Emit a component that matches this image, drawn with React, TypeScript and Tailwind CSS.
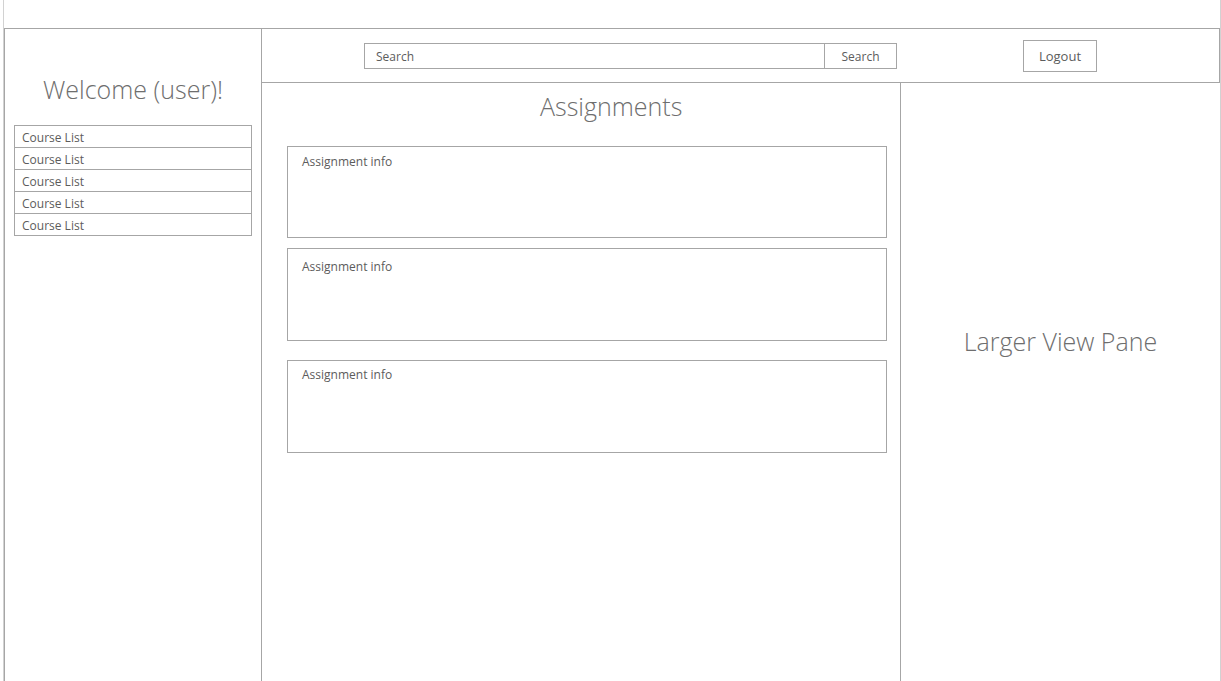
const courses = ['Course List', 'Course List', 'Course List', 'Course List', 'Course List']

const assignments = [
  { id: 1, label: 'Assignment info', box: 'mt-0 h-[92px] pt-[6px]' },
  { id: 2, label: 'Assignment info', box: 'mt-[10px] h-[93px] pt-[9px]' },
  { id: 3, label: 'Assignment info', box: 'mt-[19px] h-[93px] pt-[5px]' },
]

function Sidebar() {
  return (
    <aside className="flex w-[258px] shrink-0 flex-col border-x border-t border-[#a6a6a6] px-[9px]">
      <h1 className="mt-[43px] text-center text-[25px] leading-[34px] font-light text-[#6e6e6e]">Welcome (user)!</h1>
      <ul className="mt-[19px] flex flex-col">
        {courses.map((course, index) => (
          <li
            key={index}
            className={`flex h-[23px] items-center border border-[#a6a6a6] pt-[2px] pl-[7px] text-[12px] text-[#5c5c5c] ${index > 0 ? '-mt-px' : ''}`}
          >
            {course}
          </li>
        ))}
      </ul>
    </aside>
  )
}

function Header() {
  return (
    <header className="flex h-[55px] shrink-0 items-center border-y border-r border-[#a6a6a6] pl-[102px]">
      <div className="flex h-[26px]">
        <div className="flex w-[461px] items-center border border-[#a6a6a6] pl-[11px] pt-[2px] text-[12px] text-[#5c5c5c]">Search</div>
        <button
          type="button"
          className="-ml-px flex w-[73px] items-center justify-center border border-[#a6a6a6] pt-[2px] text-[12px] text-[#5c5c5c]"
        >
          Search
        </button>
      </div>
      <button
        type="button"
        className="ml-[126px] flex h-[32px] w-[74px] items-center justify-center border border-[#a6a6a6] pt-[2px] text-[13px] text-[#5c5c5c]"
      >
        Logout
      </button>
    </header>
  )
}

export default function App() {
  return (
    <div className="h-[681px] w-[1221px] overflow-hidden bg-white font-['Open_Sans',sans-serif]">
      <div className="ml-[3px] flex h-full w-[1218px] border-x border-[#d2d2d2] pt-[28px]">
        <Sidebar />
        <main className="flex min-w-0 flex-1 flex-col">
          <Header />
          <div className="flex flex-1">
            <section className="w-[639px] shrink-0 border-r border-[#a6a6a6] pl-[25px]">
              <h2 className="mt-[7px] pl-[253px] text-[25px] leading-[32px] font-light text-[#6e6e6e]">Assignments</h2>
              <div className="mt-[24px] flex flex-col">
                {assignments.map((item) => (
                  <div
                    key={item.id}
                    className={`w-[600px] border border-[#a6a6a6] px-[14px] text-[12px] text-[#5c5c5c] ${item.box}`}
                  >
                    {item.label}
                  </div>
                ))}
              </div>
            </section>
            <section className="flex flex-1 justify-center pt-[241px]">
              <h2 className="text-[25px] leading-[34px] font-light text-[#6e6e6e]">Larger View Pane</h2>
            </section>
          </div>
        </main>
      </div>
    </div>
  )
}
